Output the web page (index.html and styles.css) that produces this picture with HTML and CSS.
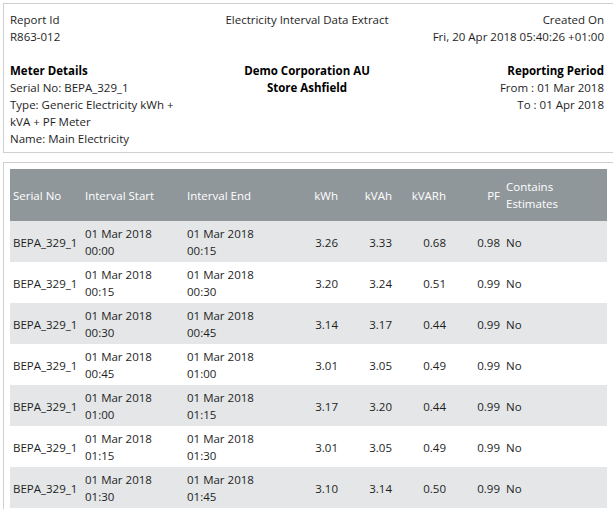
FILE: index.html
```html
<!DOCTYPE html>
<html>
<head>
<meta charset="utf-8">
<link rel="stylesheet" href="styles.css">
</head>
<body>
<div class="page">
  <section class="box summary">
    <div class="cell left">Report Id<br>R863-012</div>
    <div class="cell center">Electricity Interval Data Extract</div>
    <div class="cell right">Created On<br>Fri, 20 Apr 2018 05:40:26 +01:00</div>
    <div class="cell left details">
      <div class="heading">Meter Details</div>
      <div>Serial No: BEPA_329_1</div>
      <div>Type: Generic Electricity kWh + kVA + PF Meter</div>
      <div>Name: Main Electricity</div>
    </div>
    <div class="cell center details">
      <div class="heading">Demo Corporation AU</div>
      <div class="heading">Store Ashfield</div>
    </div>
    <div class="cell right details">
      <div class="heading">Reporting Period</div>
      <div>From : 01 Mar 2018</div>
      <div>To : 01 Apr 2018</div>
    </div>
  </section>

  <section class="box data">
    <table class="grid">
      <colgroup>
        <col class="c-serial"><col class="c-start"><col class="c-end">
        <col class="c-num"><col class="c-num2"><col class="c-num2"><col class="c-num2"><col class="c-est">
      </colgroup>
      <thead>
        <tr>
          <th>Serial No</th><th>Interval Start</th><th>Interval End</th>
          <th class="num">kWh</th><th class="num">kVAh</th><th class="num">kVARh</th><th class="num">PF</th>
          <th>Contains Estimates</th>
        </tr>
      </thead>
      <tbody>
        <tr><td>BEPA_329_1</td><td>01 Mar 2018<br>00:00</td><td>01 Mar 2018<br>00:15</td><td class="num">3.26</td><td class="num">3.33</td><td class="num">0.68</td><td class="num">0.98</td><td>No</td></tr>
        <tr><td>BEPA_329_1</td><td>01 Mar 2018<br>00:15</td><td>01 Mar 2018<br>00:30</td><td class="num">3.20</td><td class="num">3.24</td><td class="num">0.51</td><td class="num">0.99</td><td>No</td></tr>
        <tr><td>BEPA_329_1</td><td>01 Mar 2018<br>00:30</td><td>01 Mar 2018<br>00:45</td><td class="num">3.14</td><td class="num">3.17</td><td class="num">0.44</td><td class="num">0.99</td><td>No</td></tr>
        <tr><td>BEPA_329_1</td><td>01 Mar 2018<br>00:45</td><td>01 Mar 2018<br>01:00</td><td class="num">3.01</td><td class="num">3.05</td><td class="num">0.49</td><td class="num">0.99</td><td>No</td></tr>
        <tr><td>BEPA_329_1</td><td>01 Mar 2018<br>01:00</td><td>01 Mar 2018<br>01:15</td><td class="num">3.17</td><td class="num">3.20</td><td class="num">0.44</td><td class="num">0.99</td><td>No</td></tr>
        <tr><td>BEPA_329_1</td><td>01 Mar 2018<br>01:15</td><td>01 Mar 2018<br>01:30</td><td class="num">3.01</td><td class="num">3.05</td><td class="num">0.49</td><td class="num">0.99</td><td>No</td></tr>
        <tr><td>BEPA_329_1</td><td>01 Mar 2018<br>01:30</td><td>01 Mar 2018<br>01:45</td><td class="num">3.10</td><td class="num">3.14</td><td class="num">0.50</td><td class="num">0.99</td><td>No</td></tr>
      </tbody>
    </table>
  </section>
</div>
</body>
</html>
```

FILE: styles.css
```css
html, body {
  margin: 0;
  padding: 0;
  background: #fff;
  overflow: hidden;
}
body {
  font-family: "Open Sans", "Noto Sans", sans-serif;
  font-size: 11.5px;
  line-height: 17px;
  color: #1e1e1e;
}
.page {
  width: 620px;
  padding: 3px;
}
.box {
  border: 1px solid #cfcfcf;
  width: 620px;
  box-sizing: border-box;
}
.summary {
  display: grid;
  grid-template-columns: repeat(3, 198px);
  row-gap: 17px;
  padding: 7px 0 5px 6px;
}
.cell.center { text-align: center; }
.cell.right { text-align: right; }
.cell.left.details { padding-right: 14px; }
.heading {
  font-weight: 700;
  color: #000;
}
.data {
  margin-top: 9px;
  padding: 6px;
}
.grid {
  width: 597px;
  table-layout: fixed;
  border-collapse: collapse;
  border-spacing: 0;
}
.c-serial { width: 72px; }
.c-start { width: 102px; }
.c-end { width: 105px; }
.c-num { width: 52px; }
.c-num2 { width: 54px; }
.c-est { width: 104px; }
.grid th {
  background: #90979b;
  color: #fff;
  font-weight: 400;
  text-align: left;
  padding: 9px 3px;
  height: 34px;
  vertical-align: middle;
}
.grid td {
  padding: 4px 3px 3px;
  vertical-align: middle;
  color: #1e1e1e;
  white-space: nowrap;
}
.grid .num { text-align: right; }
.grid tbody tr:nth-child(odd) td { background: #e4e6e7; }
```
